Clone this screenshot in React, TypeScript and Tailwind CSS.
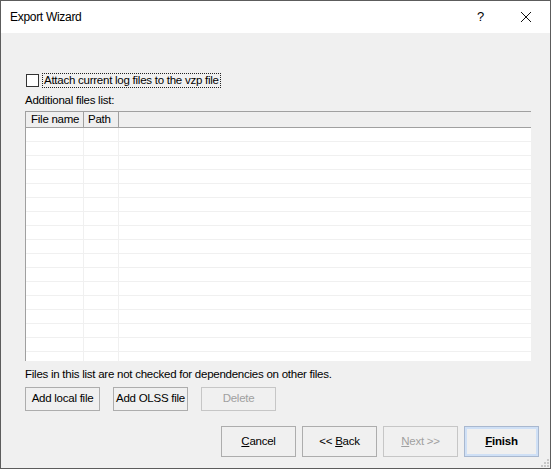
import React from "react";

const FONT = { fontFamily: '"Liberation Sans", Arial, sans-serif' };

const ROWS = Array.from({ length: 17 });

function Btn({
  children,
  disabled,
  big,
  primary,
}: {
  children: React.ReactNode;
  disabled?: boolean;
  big?: boolean;
  primary?: boolean;
}) {
  return (
    <button
      className={
        "w-[75px] flex items-center justify-center whitespace-nowrap " +
        (big ? "h-[31px] " : "h-[24px] ") +
        (primary
          ? "border border-[#a9b8cf] shadow-[inset_0_0_0_2px_#cfe0f6] bg-[#f0f0f0] font-bold text-black "
          : "border border-[#adadad] bg-[#f0f0f0] ") +
        (disabled ? "text-[#a0a0a0] border-[#c6c6c6]" : "text-black")
      }
    >
      {children}
    </button>
  );
}

export default function App() {
  return (
    <div className="w-[554px] h-[470px] bg-white text-[11.5px] tracking-[-0.25px]" style={FONT}>
      <div className="w-[551px] h-[469px] border border-[#5c5c5c] flex flex-col bg-[#f0f0f0]">
        {/* Title bar */}
        <div className="h-[32px] bg-white flex items-center pl-[9px] text-[12px] tracking-[-0.3px] text-black shrink-0">
          <span>Export Wizard</span>
          <span className="ml-auto mr-[36px] text-[13px]">?</span>
          <svg width="12" height="12" viewBox="0 0 12 12" className="mr-[18px]">
            <path d="M1 1L11 11M11 1L1 11" stroke="#111" strokeWidth="1" />
          </svg>
        </div>

        {/* Body */}
        <div className="flex-1 flex flex-col pl-[24px] pr-[11px] relative">
          <div className="mt-[40px] flex items-center h-[15px]">
            <div className="w-[13px] h-[13px] border border-[#333] bg-white ml-[1px]" />
            <span className="ml-[3px] px-[1px] border border-dotted border-[#222] leading-[13px] text-black whitespace-nowrap">
              Attach current log files to the vzp file
            </span>
          </div>
          <div className="mt-[5px] leading-[14px] text-black">Additional files list:</div>

          {/* List */}
          <div className="mt-[4px] w-[506px] h-[250px] bg-white border-l border-t border-[#a0a0a0] overflow-hidden flex flex-col">
            <div className="h-[16px] flex bg-[#efefef] border-b border-[#a0a0a0] leading-[15px] text-black shrink-0 whitespace-nowrap">
              <div className="w-[58px] pl-[5px] border-r border-[#a0a0a0]">File name</div>
              <div className="w-[35px] pl-[4px] border-r border-[#a0a0a0]">Path</div>
              <div className="flex-1" />
            </div>
            {ROWS.map((_, i) => (
              <div key={i} className="h-[14px] flex border-b border-[#f0f0f0] shrink-0">
                <div className="w-[58px] border-r border-[#f0f0f0]" />
                <div className="w-[35px] border-r border-[#f0f0f0]" />
                <div className="flex-1" />
              </div>
            ))}
          </div>

          <div className="mt-[6px] leading-[14px] text-black whitespace-nowrap">
            Files in this list are not checked for dependencies on other files.
          </div>

          <div className="mt-[6px] flex gap-[13px]">
            <Btn>Add local file</Btn>
            <Btn>Add OLSS file</Btn>
            <Btn disabled>Delete</Btn>
          </div>

          <div className="mt-[15px] flex justify-end gap-[6px]">
            <Btn big>
              <span><span className="underline">C</span>ancel</span>
            </Btn>
            <Btn big>
              <span>{"<< "}<span className="underline">B</span>ack</span>
            </Btn>
            <Btn big disabled>
              <span><span className="underline">N</span>ext {">>"}</span>
            </Btn>
            <Btn big primary>
              <span><span className="underline">F</span>inish</span>
            </Btn>
          </div>

          {/* resize grip */}
          <svg width="10" height="10" viewBox="0 0 10 10" className="absolute right-[1px] bottom-[1px]">
            {[[8, 2], [8, 5], [5, 5], [8, 8], [5, 8], [2, 8]].map(([x, y], i) => (
              <rect key={i} x={x} y={y} width="2" height="2" fill="#c8c8c8" />
            ))}
          </svg>
        </div>
      </div>
    </div>
  );
}
